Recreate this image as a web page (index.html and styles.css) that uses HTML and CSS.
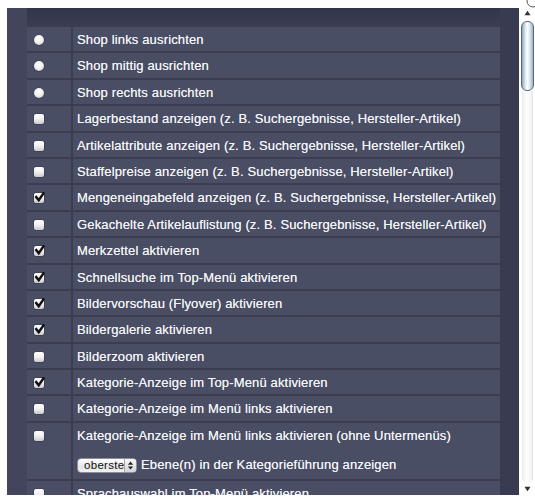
FILE: index.html
```html
<!DOCTYPE html>
<html lang="de">
<head>
<meta charset="utf-8">
<title>Einstellungen</title>
<link rel="stylesheet" href="styles.css">
</head>
<body>
<div class="frame">
  <div class="panel">
    <div class="grid">
      <div class="ctl"><span class="radio"></span></div><div class="lbl">Shop links ausrichten</div>
      <div class="ctl"><span class="radio"></span></div><div class="lbl">Shop mittig ausrichten</div>
      <div class="ctl"><span class="radio"></span></div><div class="lbl">Shop rechts ausrichten</div>
      <div class="ctl"><span class="cb"></span></div><div class="lbl">Lagerbestand anzeigen (z. B. Suchergebnisse, Hersteller-Artikel)</div>
      <div class="ctl"><span class="cb"></span></div><div class="lbl">Artikelattribute anzeigen (z. B. Suchergebnisse, Hersteller-Artikel)</div>
      <div class="ctl"><span class="cb"></span></div><div class="lbl">Staffelpreise anzeigen (z. B. Suchergebnisse, Hersteller-Artikel)</div>
      <div class="ctl"><span class="cb checked"><svg viewBox="0 0 10 10"><path d="M2 4.6 L4.3 7.4 L8.6 1.2" /></svg></span></div><div class="lbl">Mengeneingabefeld anzeigen (z. B. Suchergebnisse, Hersteller-Artikel)</div>
      <div class="ctl"><span class="cb"></span></div><div class="lbl">Gekachelte Artikelauflistung (z. B. Suchergebnisse, Hersteller-Artikel)</div>
      <div class="ctl"><span class="cb checked"><svg viewBox="0 0 10 10"><path d="M2 4.6 L4.3 7.4 L8.6 1.2" /></svg></span></div><div class="lbl">Merkzettel aktivieren</div>
      <div class="ctl"><span class="cb checked"><svg viewBox="0 0 10 10"><path d="M2 4.6 L4.3 7.4 L8.6 1.2" /></svg></span></div><div class="lbl">Schnellsuche im Top-Menü aktivieren</div>
      <div class="ctl"><span class="cb checked"><svg viewBox="0 0 10 10"><path d="M2 4.6 L4.3 7.4 L8.6 1.2" /></svg></span></div><div class="lbl">Bildervorschau (Flyover) aktivieren</div>
      <div class="ctl"><span class="cb checked"><svg viewBox="0 0 10 10"><path d="M2 4.6 L4.3 7.4 L8.6 1.2" /></svg></span></div><div class="lbl">Bildergalerie aktivieren</div>
      <div class="ctl"><span class="cb"></span></div><div class="lbl">Bilderzoom aktivieren</div>
      <div class="ctl"><span class="cb checked"><svg viewBox="0 0 10 10"><path d="M2 4.6 L4.3 7.4 L8.6 1.2" /></svg></span></div><div class="lbl">Kategorie-Anzeige im Top-Menü aktivieren</div>
      <div class="ctl"><span class="cb"></span></div><div class="lbl">Kategorie-Anzeige im Menü links aktivieren</div>
      <div class="ctl tall"><span class="cb"></span></div>
      <div class="lbl tall">
        <div class="line">Kategorie-Anzeige im Menü links aktivieren (ohne Untermenüs)</div>
        <div class="line sel-line"><span class="select">oberste<span class="arrows"><svg viewBox="0 0 8 12"><path d="M4 1.5 L7 5 L1 5 Z M4 10.5 L7 7 L1 7 Z"/></svg></span></span>Ebene(n) in der Kategorieführung anzeigen</div>
      </div>
      <div class="ctl"><span class="cb"></span></div><div class="lbl">Sprachauswahl im Top-Menü aktivieren</div>
    </div>
  </div>
  <div class="scrollbar">
    <div class="corner"><svg viewBox="0 0 16 10"><circle cx="14" cy="1" r="6" /></svg></div>
    <div class="arrow up"><svg viewBox="0 0 8 6"><path d="M4 0.5 L7.5 5.5 L0.5 5.5 Z"/></svg></div>
    <div class="track">
      <div class="thumb"></div>
      <div class="groove"></div>
    </div>
    <div class="arrow down"><svg viewBox="0 0 8 6"><path d="M4 5.5 L7.5 0.5 L0.5 0.5 Z"/></svg></div>
  </div>
</div>
</body>
</html>
```
FILE: styles.css
```css
html, body {
  margin: 0;
  padding: 0;
  background: #ffffff;
}
body {
  font-family: "Liberation Sans", Arial, sans-serif;
}
.frame {
  display: flex;
  width: 535px;
  height: 499px;
  overflow: hidden;
}
.panel {
  margin: 8px 0 0 7px;
  width: 473px;
  height: 468px;
  padding: 19px 0 0 0;
  border-left: 20px solid #42455b;
  border-right: 19px solid #393c50;
  background: linear-gradient(#32354a 0px, #3b3e53 18px, #3b3e53 100%);
  overflow: hidden;
}
.grid {
  display: grid;
  grid-template-columns: 44px 427px;
  grid-auto-rows: auto;
  column-gap: 2px;
  row-gap: 2px;
}
.ctl, .lbl {
  background: #4a4e65;
  height: 24.4px;
}
.ctl {
  padding: 8px 0 0 7px;
  box-sizing: border-box;
}
.lbl {
  color: #f4f4f6;
  font-size: 13px;
  letter-spacing: 0.15px;
  line-height: 24.4px;
  padding: 1px 0 0 4px;
  box-sizing: border-box;
  white-space: nowrap;
  overflow: hidden;
  text-shadow: 0 0 0.4px rgba(255,255,255,0.8);
}
.ctl.tall, .lbl.tall {
  height: 56px;
}
.lbl .line {
  height: 24.4px;
}
.sel-line {
  display: flex;
  align-items: center;
  margin-top: 5px;
}
.select {
  display: inline-flex;
  align-items: center;
  box-sizing: border-box;
  height: 15px;
  width: 60px;
  margin-right: 4px;
  padding-left: 6px;
  border: 1px solid #8d8f99;
  border-radius: 4px;
  background: linear-gradient(#ffffff, #e4e4e6 60%, #f2f2f2);
  color: #111;
  font-size: 11.5px;
  letter-spacing: 0.3px;
  text-shadow: none;
  line-height: 13px;
  justify-content: space-between;
  overflow: hidden;
}
.arrows {
  display: flex;
  align-items: center;
  justify-content: center;
  width: 13px;
  height: 13px;
  border-left: 1px solid #aaa;
  background: linear-gradient(#f6f6f6, #d6d6da);
}
.arrows svg {
  width: 7px;
  height: 11px;
  fill: #222;
}
.radio {
  display: block;
  width: 10px;
  height: 10px;
  border-radius: 50%;
  background: radial-gradient(circle at 45% 35%, #ffffff 0%, #f2f2f2 45%, #bdbdc2 100%);
  box-shadow: 0 0 0 0.5px rgba(40,40,50,0.6);
}
.cb {
  display: block;
  width: 10px;
  height: 10px;
  border-radius: 2px;
  background: linear-gradient(#ffffff, #f0f0f0 50%, #c9c9ce);
  box-shadow: 0 0 0 0.5px rgba(40,40,50,0.6);
  position: relative;
}
.cb svg {
  position: absolute;
  left: 0;
  top: -1px;
  width: 11px;
  height: 11px;
  fill: none;
  stroke: #111;
  stroke-width: 2.2;
  stroke-linecap: square;
}
.scrollbar {
  width: 16px;
  height: 499px;
  display: flex;
  flex-direction: column;
  align-items: center;
  background: #ffffff;
}
.corner {
  height: 10px;
  width: 16px;
}
.corner svg {
  display: block;
  width: 16px;
  height: 10px;
  fill: none;
  stroke: #555;
  stroke-width: 1;
}
.arrow svg {
  display: block;
  width: 7px;
  height: 6px;
  fill: #333;
}
.arrow.up {
  margin-bottom: 5px;
}
.track {
  flex: 1;
  width: 13px;
  display: flex;
  flex-direction: column;
  align-items: center;
}
.thumb {
  width: 11px;
  height: 68px;
  border-radius: 6px;
  border: 1px solid #56677f;
  background: linear-gradient(90deg, #8ea4bd 0%, #dfe8f1 30%, #ffffff 50%, #d3dfea 75%, #9db2c8 100%);
}
.groove {
  flex: 1;
  width: 11px;
  margin-bottom: 3px;
  border-radius: 0 0 6px 6px;
  background: linear-gradient(90deg, #e9e9e9, #ffffff 40%, #f6f6f6 80%, #e3e3e3);
}
.arrow.down {
  margin-bottom: 7px;
}
```
